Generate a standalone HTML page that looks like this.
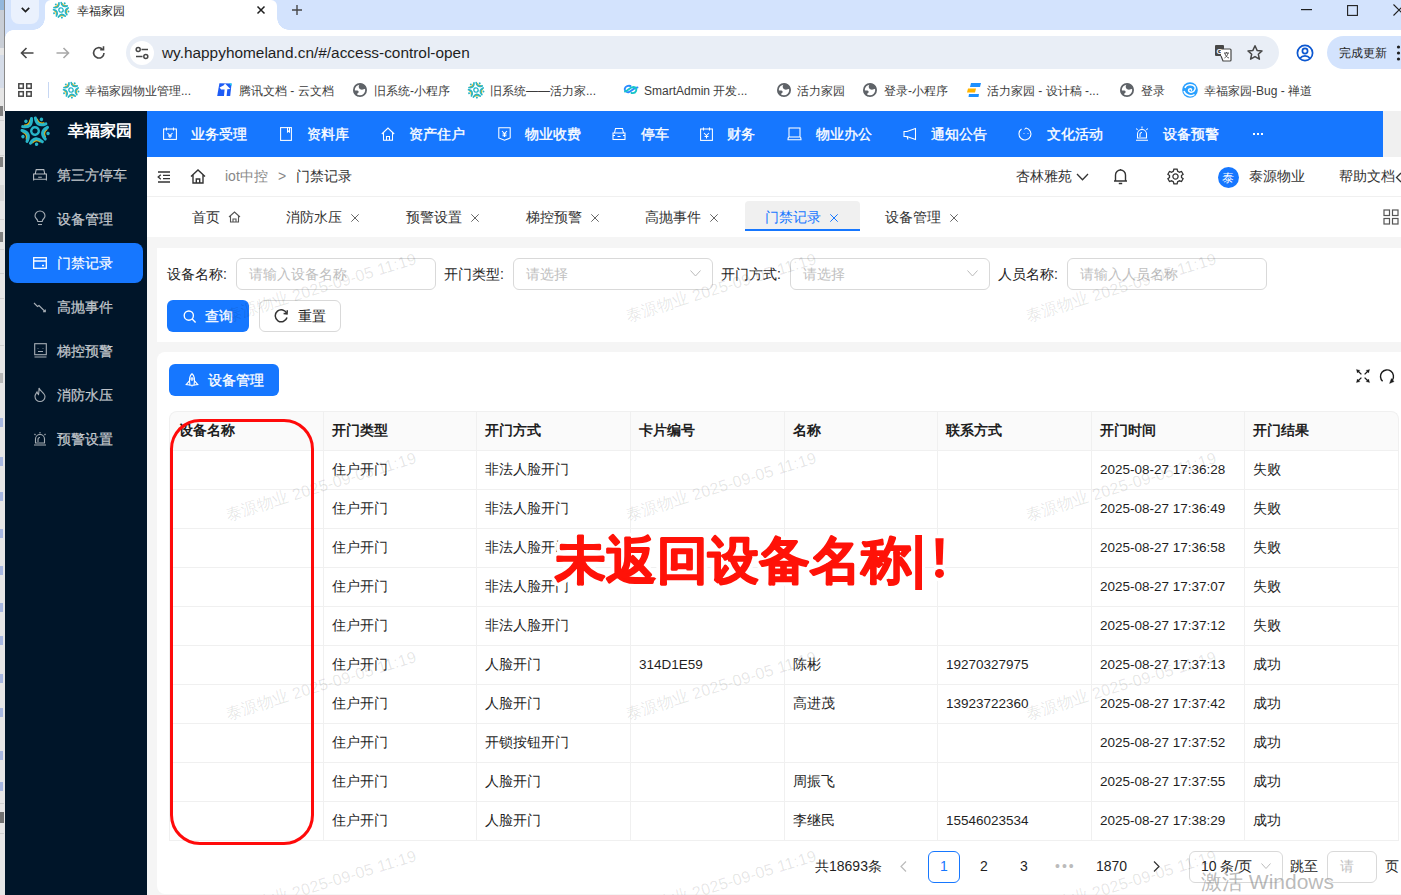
<!DOCTYPE html>
<html><head><meta charset="utf-8">
<style>
*{box-sizing:border-box;margin:0;padding:0}
html,body{width:1401px;height:895px;overflow:hidden;background:#fff;font-family:"Liberation Sans",sans-serif;position:relative}
.a{position:absolute}
.t{position:absolute;white-space:nowrap;line-height:1}
svg{position:absolute;overflow:visible}
/* chrome */
#strip{left:0;top:0;width:5px;height:895px;background:#e6e6e6}
#tabbar{left:5px;top:0;width:1396px;height:30px;background:#d3e3fd}
#tab{left:45px;top:0;width:232px;height:30px;background:#fff;border-radius:6px 6px 0 0}
#toolbar{left:5px;top:30px;width:1396px;height:81px;background:#fff}
#pill{left:126px;top:36px;width:1153px;height:33px;background:#e9eef6;border-radius:17px}
#upd{left:1327px;top:36px;width:90px;height:33px;background:#d3e3fd;border-radius:17px}
.bm{font-size:12px;color:#3c3c3c;top:84.5px}
.sm{font-size:14px;color:rgba(255,255,255,0.7);-webkit-text-stroke:0.25px rgba(255,255,255,0.7)}
.hn{font-size:14px;color:#fff;top:126.5px;-webkit-text-stroke:0.35px #fff}
.tb{font-size:14px;color:#333;top:209.5px}
.tx{font-size:14px;color:#555;top:209px}
.lb{font-size:14px;color:#1f1f1f;top:267px}
.ph{font-size:14px;color:#bfbfbf;top:267px}
.inp{top:258px;height:32px;border:1px solid #d9d9d9;border-radius:6px;background:#fff}
.hl{left:169px;width:1230px;height:1px;background:#f0f0f0}
.vl{top:411px;width:1px;height:429px;background:#f0f0f0}
.th{font-size:14px;color:#1f1f1f;font-weight:bold;top:423px}
.td{font-size:14px;color:#1f1f1f}
.pg{font-size:14px;color:#1f1f1f;top:858.5px}
.wm{position:absolute;white-space:nowrap;line-height:1;font-size:16.2px;letter-spacing:0.15px;color:rgba(0,0,0,0.1);transform:translate(-50%,-50%) rotate(-17deg)}
</style></head><body>
<div id="strip" class="a"></div>
<div id="tabbar" class="a"></div>
<div id="tab" class="a"></div>
<div id="toolbar" class="a"></div>
<div id="pill" class="a"></div>
<div id="upd" class="a"></div>
<div class="t" style="left:77px;top:5px;font-size:12px;color:#1f1f1f">幸福家园</div>
<div class="t" style="left:162px;top:45px;font-size:15.4px;color:#1f1f1f">wy.happyhomeland.cn/#/access-control-open</div>
<div class="t" style="left:1339px;top:46.5px;font-size:12px;color:#1f1f1f">完成更新</div>
<div class="t bm" style="left:85px">幸福家园物业管理...</div>
<div class="t bm" style="left:239px">腾讯文档 - 云文档</div>
<div class="t bm" style="left:374px">旧系统-小程序</div>
<div class="t bm" style="left:490px">旧系统——活力家...</div>
<div class="t bm" style="left:644px">SmartAdmin 开发...</div>
<div class="t bm" style="left:797px">活力家园</div>
<div class="t bm" style="left:884px">登录-小程序</div>
<div class="t bm" style="left:987px">活力家园 - 设计稿 -...</div>
<div class="t bm" style="left:1141px">登录</div>
<div class="t bm" style="left:1204px">幸福家园-Bug - 禅道</div>


<!-- APP -->
<div id="app" class="a" style="left:5px;top:111px;width:1396px;height:784px;background:#f5f5f5"></div>
<div id="side" class="a" style="left:5px;top:111px;width:142px;height:784px;background:#001529"></div>
<svg style="left:21px;top:117px" width="28" height="28" viewBox="-14 -14 28 28" id="logo"><g id="logo-g"><g transform="rotate(-7)">
 <g id="lg1">
  <path d="M-3.8,9.8 Q0,6.6 3.8,9.8" fill="none" stroke="#f0b400" stroke-width="2" stroke-linecap="round" transform="translate(0,1.2)"/>
  <path d="M-6,11.6 Q0,4.0 6,11.6" fill="none" stroke="#27b5c8" stroke-width="3" stroke-linecap="round"/>
  <circle cx="0" cy="13.3" r="1.75" fill="#27b5c8"/>
 </g>
 <use href="#lg1" transform="rotate(72)"/><use href="#lg1" transform="rotate(144)"/><use href="#lg1" transform="rotate(216)"/><use href="#lg1" transform="rotate(288)"/>
 <circle cx="0" cy="0" r="3.8" fill="none" stroke="#27b5c8" stroke-width="2.4"/>
</g></g></svg>
<div class="t" style="left:68px;top:123px;font-size:16px;font-weight:bold;color:#fff">幸福家园</div>
<div class="a" style="left:9px;top:243px;width:134px;height:40px;background:#1677ff;border-radius:8px"></div>
<div class="t sm" style="left:57px;top:168px">第三方停车</div>
<div class="t sm" style="left:57px;top:212px">设备管理</div>
<div class="t sm" style="left:57px;top:256px;color:#fff">门禁记录</div>
<div class="t sm" style="left:57px;top:300px">高抛事件</div>
<div class="t sm" style="left:57px;top:344px">梯控预警</div>
<div class="t sm" style="left:57px;top:388px">消防水压</div>
<div class="t sm" style="left:57px;top:432px">预警设置</div>
<!-- sidebar icons -->
<svg style="left:33px;top:169px" width="14" height="12" viewBox="0 0 14 12" fill="none" stroke="rgba(255,255,255,0.7)" stroke-width="1.1">
 <path d="M2.2,5 L3.2,0.6 H10.8 L11.8,5"/><path d="M0.6,5 H13.4 V10.2 H0.6 Z M0.6,10.2 V11.6 M13.4,10.2 V11.6 M5.2,8.3 H8.8"/>
</svg>
<svg style="left:34px;top:211px" width="12" height="15" viewBox="0 0 12 15" fill="none" stroke="rgba(255,255,255,0.65)" stroke-width="1.1">
 <path d="M3.8,10.5 C3.8,8 1,7.5 1,5 A5,5 0 0 1 11,5 C11,7.5 8.2,8 8.2,10.5 Z"/><path d="M4,13.5 H8"/>
</svg>
<svg style="left:33px;top:257px" width="14" height="12" viewBox="0 0 14 12" fill="none" stroke="#fff" stroke-width="1.3">
 <rect x="0.7" y="0.7" width="12.6" height="10.6"/><path d="M0.7,4 H13.3 M9,8.5 H11"/>
</svg>
<svg style="left:33px;top:300px" width="14" height="14" viewBox="0 0 14 14" fill="none" stroke="rgba(255,255,255,0.65)" stroke-width="1.1">
 <path d="M1,3 L4.5,6.5 L6,5.5 L12,11.5 M10,11.8 H12.3 V9.5"/>
</svg>
<svg style="left:34px;top:343px" width="13" height="15" viewBox="0 0 13 15" fill="none" stroke="rgba(255,255,255,0.65)" stroke-width="1.1">
 <rect x="0.7" y="0.7" width="11.6" height="11"/><path d="M4,5 V5.5 M9,5 V5.5 M4,8.5 H9 M0.5,14 H12.5"/>
</svg>
<svg style="left:34px;top:387px" width="12" height="15" viewBox="0 0 12 15" fill="none" stroke="rgba(255,255,255,0.65)" stroke-width="1.1">
 <path d="M5,1 C6,4 11,6 11,9.5 A5,5 0 0 1 1,9.5 C1,7.5 2.5,6 3,5 C3.5,6.5 4,7 4.5,7.5 C5,5.5 5,3 5,1 Z"/>
</svg>
<svg style="left:33px;top:431px" width="14" height="15" viewBox="0 0 14 15" fill="none" stroke="rgba(255,255,255,0.65)" stroke-width="1.1">
 <path d="M2.5,12 V8 A4.5,4.5 0 0 1 11.5,8 V12 Z M1,14 H13 M7,1 V2.5 M1.5,3 L2.5,4 M12.5,3 L11.5,4 M5,11 V8.5 A2,2 0 0 1 7,6.5"/>
</svg>

<!-- header -->
<div id="hdr" class="a" style="left:147px;top:111px;width:1236px;height:46px;background:#1677ff"></div>
<div class="t hn" style="left:191px">业务受理</div>
<div class="t hn" style="left:307px">资料库</div>
<div class="t hn" style="left:409px">资产住户</div>
<div class="t hn" style="left:525px">物业收费</div>
<div class="t hn" style="left:641px">停车</div>
<div class="t hn" style="left:727px">财务</div>
<div class="t hn" style="left:816px">物业办公</div>
<div class="t hn" style="left:931px">通知公告</div>
<div class="t hn" style="left:1047px">文化活动</div>
<div class="t hn" style="left:1163px">设备预警</div>
<div class="a" style="left:1252.6px;top:133px;width:2px;height:2px;background:#fff"></div><div class="a" style="left:1257px;top:133px;width:2px;height:2px;background:#fff"></div><div class="a" style="left:1261.4px;top:133px;width:2px;height:2px;background:#fff"></div>
<g id="hicons"></g>

<!-- header icons -->
<svg style="left:163px;top:127px" width="14" height="13" viewBox="0 0 14 13" fill="none" stroke="#fff" stroke-width="1.05">
 <rect x="0.6" y="2" width="12.8" height="10.4"/><path d="M3.5,0.5 V3.5 M10.5,0.5 V3.5 M4.5,6 L7,8.5 L9.5,6 M7,8.5 V11 M5,9 H9"/>
</svg>
<svg style="left:280px;top:127px" width="12" height="14" viewBox="0 0 12 14" fill="none" stroke="#fff" stroke-width="1.05">
 <rect x="0.6" y="0.6" width="10.8" height="12.8"/><path d="M7.5,0.6 V5 L8.5,4 L9.5,5 V0.6"/>
</svg>
<svg style="left:381px;top:127px" width="14" height="14" viewBox="0 0 14 14" fill="none" stroke="#fff" stroke-width="1.05">
 <path d="M0.8,7 L7,1 L13.2,7 M2.5,5.5 V13.2 H11.5 V5.5 M5.5,13.2 V9.5 H8.5 V13.2"/>
</svg>
<svg style="left:498px;top:127px" width="13" height="14" viewBox="0 0 13 14" fill="none" stroke="#fff" stroke-width="1.05">
 <path d="M0.8,0.8 H12.2 V11 L6.5,13.2 L0.8,11 Z M4,4 L6.5,6.5 L9,4 M6.5,6.5 V10 M4.5,7 H8.5 M4.5,8.7 H8.5"/>
</svg>
<svg style="left:612px;top:127px" width="14" height="14" viewBox="0 0 14 14" fill="none" stroke="#fff" stroke-width="1.05">
 <path d="M2.5,6 L3.5,1.5 H10.5 L11.5,6"/><rect x="1" y="6" width="12" height="6.5"/><path d="M5.5,9.5 H8.5 M1,8.5 H3 M11,8.5 H13"/>
</svg>
<svg style="left:700px;top:127px" width="13" height="14" viewBox="0 0 13 14" fill="none" stroke="#fff" stroke-width="1.05">
 <rect x="0.6" y="2" width="11.8" height="11.4"/><path d="M3.5,0.5 V3.5 M9.5,0.5 V3.5 M4,6 L6.5,8.5 L9,6 M6.5,8.5 V11.5 M4.5,9.5 H8.5"/>
</svg>
<svg style="left:787px;top:127px" width="15" height="14" viewBox="0 0 15 14" fill="none" stroke="#fff" stroke-width="1.05">
 <rect x="2" y="1" width="11" height="9"/><path d="M0.5,12.8 H14.5 M1.5,10 L0.8,12.8 M13.5,10 L14.2,12.8"/>
</svg>
<svg style="left:903px;top:127px" width="14" height="14" viewBox="0 0 14 14" fill="none" stroke="#fff" stroke-width="1.05">
 <path d="M12.5,1.5 V12.5 L4,9.5 H1 V4.5 H4 Z M4,9.5 L5,12.5"/>
</svg>
<svg style="left:1019px;top:127px" width="14" height="14" viewBox="0 0 14 14" fill="none" stroke="#fff" stroke-width="1.05">
 <path d="M2.5,2 A6,6 0 1 0 7,1 L5.5,2.5 M5,6 V6.8 M9,6 V6.8"/>
</svg>
<svg style="left:1135px;top:126px" width="14" height="15" viewBox="0 0 14 15" fill="none" stroke="#fff" stroke-width="1.05">
 <path d="M2.5,12 V8 A4.5,4.5 0 0 1 11.5,8 V12 Z M1,14.2 H13 M7,0.5 V2.5 M1.2,2.5 L2.6,3.9 M12.8,2.5 L11.4,3.9 M5,11 V8.5 A2,2 0 0 1 7,6.5"/>
</svg>
<div class="a" style="left:1383px;top:111px;width:18px;height:46px;background:#f0f0f0"></div>

<!-- breadcrumb row -->
<div class="a" style="left:147px;top:157px;width:1254px;height:40px;background:#fff;border-bottom:1px solid #f0f0f0"></div>
<svg style="left:157px;top:171px" width="14" height="12" viewBox="0 0 14 12" fill="none" stroke="#333" stroke-width="1.3">
 <path d="M1,1 H13 M6,4.3 H13 M6,7.6 H13 M1,11 H13 M3.8,3.8 L1.2,6 L3.8,8.2"/>
</svg>
<svg style="left:190px;top:169px" width="16" height="15" viewBox="0 0 16 15" fill="none" stroke="#333" stroke-width="1.4">
 <path d="M1,7.5 L8,1 L15,7.5 M3,6 V14 H13 V6 M6.3,14 V10 H9.7 V14"/>
</svg>
<div class="t" style="left:225px;top:169px;font-size:14px;color:#888">iot中控</div>
<div class="t" style="left:278px;top:169px;font-size:14px;color:#888">&gt;</div>
<div class="t" style="left:296px;top:169px;font-size:14px;color:#333">门禁记录</div>
<div class="t" style="left:1016px;top:169px;font-size:14px;color:#333">杏林雅苑</div>
<svg style="left:1076px;top:173px" width="13" height="8" viewBox="0 0 13 8" fill="none" stroke="#333" stroke-width="1.3"><path d="M1,1 L6.5,6.8 L12,1"/></svg>
<svg style="left:1113px;top:168px" width="15" height="17" viewBox="0 0 15 17" fill="none" stroke="#333" stroke-width="1.4">
 <path d="M2.5,13 V7 A5,5 0 0 1 12.5,7 V13 M1,13 H14 M7.5,1 V2 M5.8,15.5 H9.2"/>
</svg>
<svg style="left:1167px;top:168px" width="17" height="17" viewBox="-8.5 -8.5 17 17" fill="none" stroke="#333" stroke-width="1.3">
 <path d="M-1.6,-7.3 L1.6,-7.3 L2.2,-5.3 L4,-4.3 L6,-5 L7.6,-2.2 L6,-0.9 V0.9 L7.6,2.2 L6,5 L4,4.3 L2.2,5.3 L1.6,7.3 H-1.6 L-2.2,5.3 L-4,4.3 L-6,5 L-7.6,2.2 L-6,0.9 V-0.9 L-7.6,-2.2 L-6,-5 L-4,-4.3 L-2.2,-5.3 Z"/><circle r="2.6"/>
</svg>
<div class="a" style="left:1218px;top:167px;width:21px;height:21px;border-radius:50%;background:#1677ff"></div>
<div class="t" style="left:1222px;top:172px;font-size:12px;color:#fff">泰</div>
<div class="t" style="left:1249px;top:169px;font-size:14px;color:#333">泰源物业</div>
<div class="t" style="left:1339px;top:169px;font-size:14px;color:#333">帮助文档</div>
<svg style="left:1395px;top:172px" width="8" height="11" viewBox="0 0 8 11" fill="none" stroke="#333" stroke-width="1.3"><path d="M6,1 L1.5,5.5 L6,10"/></svg>

<!-- tabs row -->
<div class="a" style="left:147px;top:197px;width:1254px;height:40px;background:#fff"></div>
<div class="a" style="left:745px;top:201px;width:115px;height:30px;background:#f0f0f0;border-radius:4px 4px 0 0;border-bottom:2px solid #1677ff"></div>
<div class="t tb" style="left:192px">首页</div>
<svg style="left:228px;top:211px" width="13" height="12" viewBox="0 0 13 12" fill="none" stroke="#555" stroke-width="1.1"><path d="M1,6 L6.5,1 L12,6 M2.5,4.8 V11 H10.5 V4.8 M5,11 V8 H8 V11"/></svg>
<div class="t tb" style="left:286px">消防水压</div><svg style="left:351.3px;top:214px" width="8" height="8" viewBox="0 0 8 8" fill="none" stroke="#666" stroke-width="1"><path d="M0.3,0.3 L7.7,7.7 M7.7,0.3 L0.3,7.7"/></svg>
<div class="t tb" style="left:406px">预警设置</div><svg style="left:471.3px;top:214px" width="8" height="8" viewBox="0 0 8 8" fill="none" stroke="#666" stroke-width="1"><path d="M0.3,0.3 L7.7,7.7 M7.7,0.3 L0.3,7.7"/></svg>
<div class="t tb" style="left:526px">梯控预警</div><svg style="left:591.3px;top:214px" width="8" height="8" viewBox="0 0 8 8" fill="none" stroke="#666" stroke-width="1"><path d="M0.3,0.3 L7.7,7.7 M7.7,0.3 L0.3,7.7"/></svg>
<div class="t tb" style="left:645px">高抛事件</div><svg style="left:710.3px;top:214px" width="8" height="8" viewBox="0 0 8 8" fill="none" stroke="#666" stroke-width="1"><path d="M0.3,0.3 L7.7,7.7 M7.7,0.3 L0.3,7.7"/></svg>
<div class="t tb" style="left:765px;color:#1677ff">门禁记录</div><svg style="left:830.3px;top:214px" width="8" height="8" viewBox="0 0 8 8" fill="none" stroke="#1677ff" stroke-width="1"><path d="M0.3,0.3 L7.7,7.7 M7.7,0.3 L0.3,7.7"/></svg>
<div class="t tb" style="left:885px">设备管理</div><svg style="left:950.3px;top:214px" width="8" height="8" viewBox="0 0 8 8" fill="none" stroke="#666" stroke-width="1"><path d="M0.3,0.3 L7.7,7.7 M7.7,0.3 L0.3,7.7"/></svg>
<svg style="left:1383px;top:209px" width="16" height="16" viewBox="0 0 16 16" fill="none" stroke="#555" stroke-width="1.2">
 <rect x="1" y="1" width="5.5" height="5.5"/><rect x="9.5" y="1" width="5.5" height="5.5"/><rect x="1" y="9.5" width="5.5" height="5.5"/><rect x="9.5" y="9.5" width="5.5" height="5.5"/>
</svg>

<!-- search card -->
<div class="a" style="left:157px;top:248px;width:1250px;height:94px;background:#fff"></div>
<div class="t lb" style="left:167px">设备名称:</div>
<div class="a inp" style="left:236px;width:200px"></div>
<div class="t ph" style="left:249px">请输入设备名称</div>
<div class="t lb" style="left:444px">开门类型:</div>
<div class="a inp" style="left:513px;width:200px"></div>
<div class="t ph" style="left:526px">请选择</div>
<svg style="left:690px;top:270px" width="11" height="7" viewBox="0 0 11 7" fill="none" stroke="#bbb" stroke-width="1"><path d="M0.5,0.5 L5.5,6 L10.5,0.5"/></svg>
<div class="t lb" style="left:721px">开门方式:</div>
<div class="a inp" style="left:790px;width:200px"></div>
<div class="t ph" style="left:803px">请选择</div>
<svg style="left:967px;top:270px" width="11" height="7" viewBox="0 0 11 7" fill="none" stroke="#bbb" stroke-width="1"><path d="M0.5,0.5 L5.5,6 L10.5,0.5"/></svg>
<div class="t lb" style="left:998px">人员名称:</div>
<div class="a inp" style="left:1067px;width:200px"></div>
<div class="t ph" style="left:1080px">请输入人员名称</div>
<div class="a" style="left:167px;top:300px;width:82px;height:32px;background:#1677ff;border-radius:6px"></div>
<svg style="left:183px;top:309.5px" width="14" height="14" viewBox="0 0 14 14" fill="none" stroke="#fff" stroke-width="1.35"><circle cx="5.8" cy="5.6" r="4.6"/><path d="M9.2,9 L12.6,12.4"/></svg>
<div class="t" style="left:205px;top:309px;font-size:14px;color:#fff;-webkit-text-stroke:0.3px #fff">查询</div>
<div class="a" style="left:259px;top:300px;width:82px;height:32px;background:#fff;border:1px solid #d9d9d9;border-radius:6px"></div>
<svg style="left:274px;top:308px" width="15" height="15" viewBox="0 0 15 15" fill="none" stroke="#333" stroke-width="1.5"><path d="M12.8,5.5 A6,6 0 1 0 13,9.5"/><path d="M13.2,1.8 V5.8 H9.2" stroke-width="0"/><path d="M13.3,2.3 L13,5.8 L9.6,5.4" /></svg>
<div class="t" style="left:297.5px;top:309px;font-size:14px;color:#1f1f1f">重置</div>

<!-- table card -->
<div class="a" style="left:157px;top:352px;width:1260px;height:542px;background:#fff;border-radius:8px"></div>
<div class="a" style="left:169px;top:364px;width:110px;height:32px;background:#1677ff;border-radius:6px"></div>
<svg style="left:185px;top:373px" width="14" height="14" viewBox="0 0 14 14" fill="none" stroke="#fff" stroke-width="1.1"><path d="M7,0.8 C9.6,2.8 9.8,8 9,12.2 H5 C4.2,8 4.4,2.8 7,0.8 Z"/><path d="M4.6,7.6 L1.2,11.6 L4.9,12 M9.4,7.6 L12.8,11.6 L9.1,12 M7,12.2 V13.6"/><circle cx="7" cy="6" r="1.1"/></svg>
<div class="t" style="left:208px;top:373px;font-size:14px;color:#fff;-webkit-text-stroke:0.3px #fff">设备管理</div>
<svg style="left:1356px;top:369px" width="14" height="14" viewBox="0 0 14 14" fill="none" stroke="#1a1a1a" stroke-width="1.3"><path d="M2.2,2.2 L5.4,5.4 M11.8,2.2 L8.6,5.4 M2.2,11.8 L5.4,8.6 M11.8,11.8 L8.6,8.6"/><path d="M0.4,0.4 L1.4,3.9 L3.9,1.4 Z M13.6,0.4 L12.6,3.9 L10.1,1.4 Z M0.4,13.6 L1.4,10.1 L3.9,12.6 Z M13.6,13.6 L12.6,10.1 L10.1,12.6 Z" fill="#1a1a1a" stroke-width="0.3"/></svg>
<svg style="left:1379px;top:369px" width="16" height="16" viewBox="0 0 16 16" fill="none" stroke="#1a1a1a" stroke-width="1.4"><path d="M3.6,12.2 A6.5,6.5 0 1 1 13.4,11"/><path d="M10.6,14.4 L15,12.6 L12.4,9.6 Z" fill="#1a1a1a" stroke-width="0.4"/></svg>

<div class="a" style="left:169px;top:411px;width:1230px;height:39px;background:#fafafa;border-radius:8px 8px 0 0;border:1px solid #f0f0f0;border-bottom:none"></div>
<div class="a vl" style="left:1398px;top:419px;height:421px"></div>
<div class="a vl" style="left:169px;top:419px;height:421px"></div>
<div class="a hl" style="top:450px"></div>
<div class="a hl" style="top:489px"></div>
<div class="a hl" style="top:528px"></div>
<div class="a hl" style="top:567px"></div>
<div class="a hl" style="top:606px"></div>
<div class="a hl" style="top:645px"></div>
<div class="a hl" style="top:684px"></div>
<div class="a hl" style="top:723px"></div>
<div class="a hl" style="top:762px"></div>
<div class="a hl" style="top:801px"></div>
<div class="a hl" style="top:840px"></div>
<div class="a vl" style="left:323px"></div>
<div class="a vl" style="left:476px"></div>
<div class="a vl" style="left:630px"></div>
<div class="a vl" style="left:784px"></div>
<div class="a vl" style="left:937px"></div>
<div class="a vl" style="left:1091px"></div>
<div class="a vl" style="left:1244px"></div>
<div class="t th" style="left:178.5px">设备名称</div>
<div class="t th" style="left:332px">开门类型</div>
<div class="t th" style="left:485px">开门方式</div>
<div class="t th" style="left:639px">卡片编号</div>
<div class="t th" style="left:793px">名称</div>
<div class="t th" style="left:946px">联系方式</div>
<div class="t th" style="left:1100px">开门时间</div>
<div class="t th" style="left:1253px">开门结果</div>
<div class="t td" style="left:332px;top:462px">住户开门</div>
<div class="t td" style="left:485px;top:462px">非法人脸开门</div>
<div class="t td" style="left:1100px;top:463px;font-size:13.5px">2025-08-27 17:36:28</div>
<div class="t td" style="left:1253px;top:462px">失败</div>
<div class="t td" style="left:332px;top:501px">住户开门</div>
<div class="t td" style="left:485px;top:501px">非法人脸开门</div>
<div class="t td" style="left:1100px;top:502px;font-size:13.5px">2025-08-27 17:36:49</div>
<div class="t td" style="left:1253px;top:501px">失败</div>
<div class="t td" style="left:332px;top:540px">住户开门</div>
<div class="t td" style="left:485px;top:540px">非法人脸开门</div>
<div class="t td" style="left:1100px;top:541px;font-size:13.5px">2025-08-27 17:36:58</div>
<div class="t td" style="left:1253px;top:540px">失败</div>
<div class="t td" style="left:332px;top:579px">住户开门</div>
<div class="t td" style="left:485px;top:579px">非法人脸开门</div>
<div class="t td" style="left:1100px;top:580px;font-size:13.5px">2025-08-27 17:37:07</div>
<div class="t td" style="left:1253px;top:579px">失败</div>
<div class="t td" style="left:332px;top:618px">住户开门</div>
<div class="t td" style="left:485px;top:618px">非法人脸开门</div>
<div class="t td" style="left:1100px;top:619px;font-size:13.5px">2025-08-27 17:37:12</div>
<div class="t td" style="left:1253px;top:618px">失败</div>
<div class="t td" style="left:332px;top:657px">住户开门</div>
<div class="t td" style="left:485px;top:657px">人脸开门</div>
<div class="t td" style="left:639px;top:658px;font-size:13.5px">314D1E59</div>
<div class="t td" style="left:793px;top:657px">陈彬</div>
<div class="t td" style="left:946px;top:658px;font-size:13.5px">19270327975</div>
<div class="t td" style="left:1100px;top:658px;font-size:13.5px">2025-08-27 17:37:13</div>
<div class="t td" style="left:1253px;top:657px">成功</div>
<div class="t td" style="left:332px;top:696px">住户开门</div>
<div class="t td" style="left:485px;top:696px">人脸开门</div>
<div class="t td" style="left:793px;top:696px">高进茂</div>
<div class="t td" style="left:946px;top:697px;font-size:13.5px">13923722360</div>
<div class="t td" style="left:1100px;top:697px;font-size:13.5px">2025-08-27 17:37:42</div>
<div class="t td" style="left:1253px;top:696px">成功</div>
<div class="t td" style="left:332px;top:735px">住户开门</div>
<div class="t td" style="left:485px;top:735px">开锁按钮开门</div>
<div class="t td" style="left:1100px;top:736px;font-size:13.5px">2025-08-27 17:37:52</div>
<div class="t td" style="left:1253px;top:735px">成功</div>
<div class="t td" style="left:332px;top:774px">住户开门</div>
<div class="t td" style="left:485px;top:774px">人脸开门</div>
<div class="t td" style="left:793px;top:774px">周振飞</div>
<div class="t td" style="left:1100px;top:775px;font-size:13.5px">2025-08-27 17:37:55</div>
<div class="t td" style="left:1253px;top:774px">成功</div>
<div class="t td" style="left:332px;top:813px">住户开门</div>
<div class="t td" style="left:485px;top:813px">人脸开门</div>
<div class="t td" style="left:793px;top:813px">李继民</div>
<div class="t td" style="left:946px;top:814px;font-size:13.5px">15546023534</div>
<div class="t td" style="left:1100px;top:814px;font-size:13.5px">2025-08-27 17:38:29</div>
<div class="t td" style="left:1253px;top:813px">成功</div>

<!-- pagination -->
<div class="t pg" style="left:815px">共18693条</div>
<svg style="left:900px;top:861px" width="7" height="11" viewBox="0 0 7 11" fill="none" stroke="#bbb" stroke-width="1.2"><path d="M6,0.5 L1,5.5 L6,10.5"/></svg>
<div class="a" style="left:928px;top:851px;width:32px;height:32px;border:1px solid #1677ff;border-radius:6px;background:#fff"></div>
<div class="t pg" style="left:940px;color:#1677ff;font-weight:500">1</div>
<div class="t pg" style="left:980px">2</div>
<div class="t pg" style="left:1020px">3</div>
<div class="t pg" style="left:1055px;color:#bbb;letter-spacing:2px">•••</div>
<div class="t pg" style="left:1096px">1870</div>
<svg style="left:1153px;top:861px" width="7" height="11" viewBox="0 0 7 11" fill="none" stroke="#333" stroke-width="1.2"><path d="M1,0.5 L6,5.5 L1,10.5"/></svg>
<div class="a" style="left:1189px;top:851px;width:94px;height:32px;border:1px solid #d9d9d9;border-radius:6px;background:#fff"></div>
<div class="t pg" style="left:1201px">10 条/页</div>
<svg style="left:1261px;top:863px" width="10" height="6" viewBox="0 0 10 6" fill="none" stroke="#bbb" stroke-width="1"><path d="M0.5,0.5 L5,5.5 L9.5,0.5"/></svg>
<div class="t pg" style="left:1290px">跳至</div>
<div class="a" style="left:1327px;top:851px;width:50px;height:32px;border:1px solid #d9d9d9;border-radius:6px;background:#fff"></div>
<div class="t pg" style="left:1340px;color:#bfbfbf">请</div>
<div class="t pg" style="left:1385px">页</div>
<div class="a" style="left:147px;top:894px;width:1254px;height:1px;background:#f5f5f5"></div>

<!-- watermarks -->
<div class="wm" style="left:321px;top:287px">泰源物业 2025-09-05 11:19</div><div class="wm" style="left:721px;top:287px">泰源物业 2025-09-05 11:19</div><div class="wm" style="left:1121px;top:287px">泰源物业 2025-09-05 11:19</div><div class="wm" style="left:321px;top:486px">泰源物业 2025-09-05 11:19</div><div class="wm" style="left:721px;top:486px">泰源物业 2025-09-05 11:19</div><div class="wm" style="left:1121px;top:486px">泰源物业 2025-09-05 11:19</div><div class="wm" style="left:321px;top:685px">泰源物业 2025-09-05 11:19</div><div class="wm" style="left:721px;top:685px">泰源物业 2025-09-05 11:19</div><div class="wm" style="left:1121px;top:685px">泰源物业 2025-09-05 11:19</div><div class="wm" style="left:321px;top:884px">泰源物业 2025-09-05 11:19</div><div class="wm" style="left:721px;top:884px">泰源物业 2025-09-05 11:19</div><div class="wm" style="left:1121px;top:884px">泰源物业 2025-09-05 11:19</div>

<!-- annotations -->
<div class="a" style="left:169.5px;top:418.5px;width:144px;height:426px;border:3.5px solid #ff0a0a;border-radius:30px"></div>
<svg style="left:0;top:0" width="1401" height="895">
 <text x="555" y="577.5" font-family="Liberation Sans, sans-serif" font-size="50.5" font-weight="bold" fill="#ff1208" stroke="#fff" stroke-width="9" stroke-linejoin="round">未返回设备名称</text>
 <text x="555" y="577.5" font-family="Liberation Sans, sans-serif" font-size="50.5" font-weight="bold" fill="#ff1208" stroke="#ff1208" stroke-width="1.6" stroke-linejoin="round">未返回设备名称</text>
 <rect x="912" y="532" width="13" height="61" fill="#fff"/>
 <rect x="915.2" y="535" width="6.8" height="55" fill="#ff1208"/>
 <g stroke="#fff" stroke-width="7" stroke-linejoin="round" paint-order="stroke" fill="#ff1208">
  <path d="M935.4,538.3 H943.6 L942.6,564.8 H936.4 Z"/>
  <circle cx="939.5" cy="573.4" r="4.5"/>
 </g>
</svg>
<div class="t" style="left:1201px;top:871px;font-size:21px;color:rgba(128,128,128,0.55)">激活 Windows</div>

<!-- chrome icons -->
<div class="a" style="left:11px;top:-8px;width:28px;height:32px;background:#eaf1fd;border-radius:8px"></div>
<svg style="left:21px;top:7px" width="9" height="6" viewBox="0 0 9 6" fill="none" stroke="#1f1f1f" stroke-width="1.7"><path d="M0.8,0.8 L4.5,4.5 L8.2,0.8"/></svg>
<div class="a" style="left:33px;top:18px;width:12px;height:12px;background:radial-gradient(circle at 0 0,transparent 11.5px,#fff 12px)"></div>
<div class="a" style="left:277px;top:18px;width:12px;height:12px;background:radial-gradient(circle at 12px 0,transparent 11.5px,#fff 12px)"></div>
<div class="a" style="left:5px;top:30px;width:8px;height:8px;background:radial-gradient(circle at 8px 8px,#fff 7.5px,#d3e3fd 8px)"></div>
<svg style="left:53px;top:2px" width="16" height="16" viewBox="-14 -14 28 28"><use href="#logo-g"/></svg>
<svg style="left:257px;top:6px" width="8" height="8" viewBox="0 0 8 8" fill="none" stroke="#1f1f1f" stroke-width="1.5"><path d="M0.5,0.5 L7.5,7.5 M7.5,0.5 L0.5,7.5"/></svg>
<svg style="left:292px;top:5px" width="10" height="10" viewBox="0 0 10 10" fill="none" stroke="#474747" stroke-width="1.4"><path d="M5,0 V10 M0,5 H10"/></svg>
<svg style="left:1301px;top:9px" width="11" height="2" viewBox="0 0 11 2"><rect width="11" height="1.2" fill="#1f1f1f"/></svg>
<svg style="left:1347px;top:5px" width="11" height="11" viewBox="0 0 11 11" fill="none" stroke="#1f1f1f" stroke-width="1.1"><rect x="0.6" y="0.6" width="9.8" height="9.8"/></svg>
<svg style="left:1393px;top:4px" width="12" height="12" viewBox="0 0 12 12" fill="none" stroke="#1f1f1f" stroke-width="1.1"><path d="M0.5,0.5 L11.5,11.5 M11.5,0.5 L0.5,11.5"/></svg>
<!-- nav -->
<svg style="left:20px;top:46px" width="14" height="14" viewBox="0 0 14 14" fill="none" stroke="#474747" stroke-width="1.6"><path d="M13.5,7 H1.5 M6.5,2 L1.5,7 L6.5,12"/></svg>
<svg style="left:56px;top:46px" width="14" height="14" viewBox="0 0 14 14" fill="none" stroke="#a8a8a8" stroke-width="1.6"><path d="M0.5,7 H12.5 M7.5,2 L12.5,7 L7.5,12"/></svg>
<svg style="left:92px;top:46px" width="14" height="14" viewBox="0 0 14 14" fill="none" stroke="#474747" stroke-width="1.6"><path d="M12,7 A5.2,5.2 0 1 1 10.3,3"/><path d="M8.2,3.6 H11.5 V0.3" stroke-width="1.6"/></svg>
<div class="a" style="left:130px;top:41px;width:24px;height:24px;border-radius:50%;background:#fff"></div>
<svg style="left:135px;top:46px" width="14" height="14" viewBox="0 0 14 14" fill="none" stroke="#474747" stroke-width="1.5"><path d="M6.5,3.5 H13 M1,10.5 H7.5"/><circle cx="3.2" cy="3.5" r="2"/><circle cx="10.8" cy="10.5" r="2"/></svg>
<svg style="left:1214px;top:44px" width="18" height="18" viewBox="0 0 18 18"><rect x="1" y="1" width="9" height="11" rx="1" fill="#474747"/><path d="M7,5 H16 A1,1 0 0 1 17,6 V16 A1,1 0 0 1 16,17 H9 L7,12" fill="#fff" stroke="#474747" stroke-width="1.2"/><text x="2.6" y="9.5" font-size="7.5" font-family="Liberation Sans" font-weight="bold" fill="#fff">G</text><path d="M10,9 H15 M12.5,8 V9 M10.8,9 C11.5,12 13,13.5 15,14 M14,9 C13.5,11.5 12,13.2 10.5,14" fill="none" stroke="#474747" stroke-width="0.9"/></svg>
<svg style="left:1246px;top:44px" width="18" height="18" viewBox="0 0 18 18" fill="none" stroke="#474747" stroke-width="1.5" stroke-linejoin="round"><path d="M9,1.8 L11.1,6.4 L16,6.9 L12.3,10.2 L13.4,15.2 L9,12.6 L4.6,15.2 L5.7,10.2 L2,6.9 L6.9,6.4 Z"/></svg>
<svg style="left:1296px;top:44px" width="18" height="18" viewBox="0 0 18 18" fill="none" stroke="#0b57d0" stroke-width="1.7"><circle cx="9" cy="9" r="7.6"/><circle cx="9" cy="7" r="2.6"/><path d="M4,14.2 C6.5,11 11.5,11 14,14.2"/></svg>
<svg style="left:1396px;top:45px" width="5" height="16" viewBox="0 0 5 16" fill="#1f1f1f"><circle cx="2.5" cy="2" r="1.6"/><circle cx="2.5" cy="8" r="1.6"/><circle cx="2.5" cy="14" r="1.6"/></svg>
<!-- bookmarks icons -->
<svg style="left:18px;top:83px" width="14" height="14" viewBox="0 0 14 14" fill="none" stroke="#474747" stroke-width="1.5"><rect x="0.8" y="0.8" width="4.5" height="4.5"/><rect x="8.7" y="0.8" width="4.5" height="4.5"/><rect x="0.8" y="8.7" width="4.5" height="4.5"/><rect x="8.7" y="8.7" width="4.5" height="4.5"/></svg>
<div class="a" style="left:47.5px;top:82px;width:1px;height:16px;background:#c7d7f3"></div>
<svg style="left:63px;top:82px" width="16" height="16" viewBox="-14 -14 28 28"><use href="#logo-g"/></svg>
<svg style="left:217px;top:83px" width="16" height="14" viewBox="0 0 16 14"><path d="M2.4,0.2 L14.6,0.4 L13.2,13 L0.2,13 Z" fill="#1e5cf5"/><path d="M12,0.3 L14.6,0.4 L14.4,3 Z" fill="#17e0f0"/><path d="M8,0.4 L13.4,5.9 L10.3,6.2 L9.6,13.1 L7,13.1 L7.6,6.6 L4.1,6.6 L2.6,4.4 L6.8,2.2 Z" fill="#fff"/></svg>
<svg style="left:352px;top:82px" width="16" height="16" viewBox="0 0 16 16"><use href="#globe"/></svg>
<svg style="left:468px;top:82px" width="16" height="16" viewBox="-14 -14 28 28"><use href="#logo-g"/></svg>
<svg style="left:622px;top:84px" width="17" height="12" viewBox="0 0 17 12" fill="none" stroke-width="1.9" stroke-linecap="round"><path d="M8.5,2 C6.5,1.5 3.5,2 2.8,4.5 C2.2,7 4.5,8.5 6.5,8.2 C9,7.8 11,5 13.5,3.8 L15.5,3.5" stroke="#2a8cff"/><path d="M3,7.5 L5,6.5 C7,5 9,3 11.5,3 C14,3.2 14.8,5.5 14,7.2 C13.2,9 11,9.3 9.5,9" stroke="#17c5c9"/></svg>
<svg style="left:776px;top:82px" width="16" height="16" viewBox="0 0 16 16"><use href="#globe"/></svg>
<svg style="left:862px;top:82px" width="16" height="16" viewBox="0 0 16 16"><use href="#globe"/></svg>
<svg style="left:966px;top:82px" width="16" height="16" viewBox="0 0 16 16"><path d="M5,1 H15 L14,5 H4 Z" fill="#1e90ff"/><path d="M2,6.5 H10 L9,10.5 H1 Z" fill="#ffb400"/><path d="M3,12 H13 L12.5,15 H2.5 Z" fill="#1e90ff"/></svg>
<svg style="left:1119px;top:82px" width="16" height="16" viewBox="0 0 16 16"><use href="#globe"/></svg>
<svg style="left:1182px;top:82px" width="16" height="16" viewBox="0 0 16 16"><circle cx="8" cy="8" r="7.8" fill="#29a0ff"/><path d="M3,6 C4,2 11,1.5 13,5 C14,8 11,11 8,10 C6,9.5 6,7 8,6.8 C9.5,6.6 10,8 9,8.5 M2,9 C3,13 9,15 12.5,12.5" fill="none" stroke="#fff" stroke-width="1.5"/></svg>
<svg width="0" height="0" style="left:0;top:0"><defs>
 <g id="globe"><circle cx="8" cy="8" r="6.1" fill="#fff" stroke="#5f6368" stroke-width="1.8"/><path d="M8.4,1.6 C7,3 6.3,4.6 7,6 C8,7.6 10,8.2 11.6,7.2 L14.4,6.6 A6.6,6.6 0 0 0 8.4,1.6 Z" fill="#5f6368"/><path d="M1.5,8.6 L5.4,8.6 C7,8.9 7,10.6 6,11.1 C5,11.6 4.6,13 5.6,14.5 A6.6,6.6 0 0 1 1.5,8.6 Z" fill="#5f6368"/></g>
</defs></svg>
<!-- left strip details -->
<div class="a" style="left:0;top:0;width:5px;height:10px;background:#93b7dc"></div>
<div class="a" style="left:0;top:10px;width:5px;height:38px;background:#c9ced6"></div>
<div class="a" style="left:0;top:55px;width:5px;height:33px;background:#d5dce8"></div>
<div class="a" style="left:0;top:185px;width:4px;height:16px;background:#d8d8d8"></div>
<div class="a" style="left:0;top:120px;width:4px;height:1px;background:#d0d0d0"></div>
<div class="a" style="left:0;top:155px;width:4px;height:1px;background:#d0d0d0"></div>
<div class="a" style="left:0;top:219px;width:4px;height:1px;background:#d0d0d0"></div>
<div class="a" style="left:0;top:249px;width:4px;height:1px;background:#d0d0d0"></div>
<div class="a" style="left:0;top:273px;width:4px;height:1px;background:#d0d0d0"></div>
<div class="a" style="left:0;top:298px;width:4px;height:1px;background:#d0d0d0"></div>
<div class="a" style="left:0;top:345px;width:4px;height:1px;background:#d0d0d0"></div>
<div class="a" style="left:0;top:803px;width:4px;height:1px;background:#d0d0d0"></div>
<div class="a" style="left:0;top:833px;width:4px;height:1px;background:#d0d0d0"></div>
<div class="a" style="left:0;top:106px;width:3px;height:10px;background:#555;opacity:0.7"></div>
<div class="a" style="left:0;top:157px;width:3px;height:10px;background:#555;opacity:0.7"></div>
<div class="a" style="left:0;top:232px;width:3px;height:10px;background:#555;opacity:0.7"></div>
<div class="a" style="left:0;top:373px;width:3px;height:10px;background:#999;opacity:0.6"></div>
<div class="a" style="left:0;top:418px;width:3px;height:9px;background:#4a70d8;opacity:0.4"></div>
<div class="a" style="left:0;top:457px;width:3px;height:9px;background:#4a70d8;opacity:0.4"></div>
<div class="a" style="left:0;top:492px;width:3px;height:9px;background:#4a70d8;opacity:0.4"></div>
<div class="a" style="left:0;top:529px;width:3px;height:9px;background:#4a70d8;opacity:0.4"></div>
<div class="a" style="left:0;top:566px;width:3px;height:9px;background:#4a70d8;opacity:0.4"></div>
<div class="a" style="left:0;top:603px;width:3px;height:9px;background:#4a70d8;opacity:0.4"></div>
<div class="a" style="left:0;top:636px;width:3px;height:9px;background:#4a70d8;opacity:0.4"></div>
<div class="a" style="left:0;top:674px;width:3px;height:9px;background:#4a70d8;opacity:0.4"></div>
<div class="a" style="left:0;top:708px;width:3px;height:9px;background:#4a70d8;opacity:0.4"></div>
<div class="a" style="left:0;top:751px;width:3px;height:9px;background:#4a70d8;opacity:0.4"></div>
<div class="a" style="left:0;top:782px;width:3px;height:9px;background:#4a70d8;opacity:0.4"></div>
<div class="a" style="left:0;top:812px;width:4px;height:11px;background:#222;opacity:0.6"></div>
<div class="a" style="left:4px;top:0;width:1px;height:111px;background:#8a8a8a"></div>
</body></html>
